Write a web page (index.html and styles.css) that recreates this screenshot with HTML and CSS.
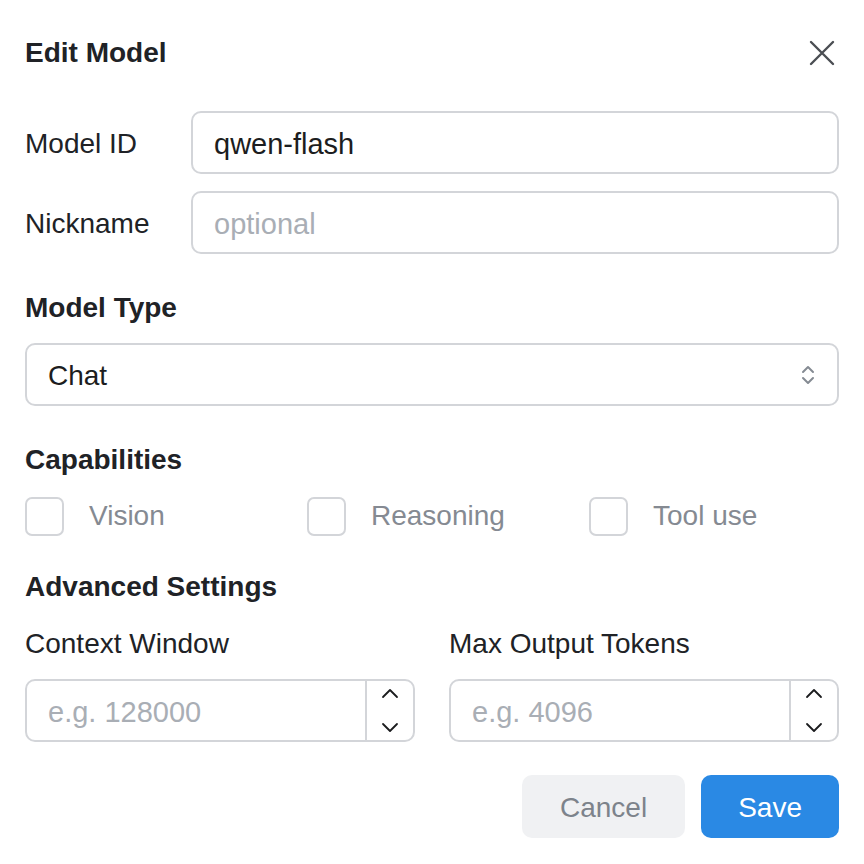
FILE: index.html
```html
<!DOCTYPE html>
<html lang="en">
<head>
<meta charset="utf-8">
<title>Edit Model</title>
<link rel="stylesheet" href="styles.css">
</head>
<body>
<div class="dialog">
  <div class="header">
    <h1 class="title">Edit Model</h1>
    <svg class="close" width="26" height="26" viewBox="0 0 26 26" aria-label="Close">
      <path d="M2 2 L24 24 M24 2 L2 24" stroke="#4b4e53" stroke-width="2.4" stroke-linecap="round" fill="none"/>
    </svg>
  </div>

  <div class="field-row first">
    <label class="row-label">Model ID</label>
    <input class="text-input" type="text" value="qwen-flash">
  </div>
  <div class="field-row">
    <label class="row-label">Nickname</label>
    <input class="text-input" type="text" placeholder="optional">
  </div>

  <h2 class="section">Model Type</h2>
  <div class="select">
    <span class="select-value">Chat</span>
    <svg class="select-arrows" width="14" height="24" viewBox="0 0 14 24">
      <path d="M2 9 L7 4 L12 9 M2 15 L7 20 L12 15" stroke="#858b93" stroke-width="2" stroke-linecap="round" stroke-linejoin="round" fill="none"/>
    </svg>
  </div>

  <h2 class="section">Capabilities</h2>
  <div class="caps">
    <div class="cap"><span class="checkbox"></span><span class="cap-label">Vision</span></div>
    <div class="cap"><span class="checkbox"></span><span class="cap-label">Reasoning</span></div>
    <div class="cap"><span class="checkbox"></span><span class="cap-label">Tool use</span></div>
  </div>

  <h2 class="section advanced">Advanced Settings</h2>
  <div class="adv-grid">
    <div class="adv-col">
      <label class="col-label">Context Window</label>
      <div class="number">
        <input class="number-input" type="text" placeholder="e.g. 128000">
        <div class="spinner">
          <svg width="18" height="62" viewBox="0 0 18 62">
            <path d="M2 17 L9 10 L16 17 M2 44 L9 51 L16 44" stroke="#1b1c1e" stroke-width="1.8" stroke-linecap="round" stroke-linejoin="round" fill="none"/>
          </svg>
        </div>
      </div>
    </div>
    <div class="adv-col">
      <label class="col-label">Max Output Tokens</label>
      <div class="number">
        <input class="number-input" type="text" placeholder="e.g. 4096">
        <div class="spinner">
          <svg width="18" height="62" viewBox="0 0 18 62">
            <path d="M2 17 L9 10 L16 17 M2 44 L9 51 L16 44" stroke="#1b1c1e" stroke-width="1.8" stroke-linecap="round" stroke-linejoin="round" fill="none"/>
          </svg>
        </div>
      </div>
    </div>
  </div>

  <div class="actions">
    <button class="btn btn-cancel">Cancel</button>
    <button class="btn btn-save">Save</button>
  </div>
</div>
</body>
</html>
```

FILE: styles.css
```css
* { box-sizing: border-box; }

html, body {
  margin: 0;
  padding: 0;
  background: #ffffff;
}

body {
  font-family: "Liberation Sans", Arial, Helvetica, sans-serif;
  font-size: 28px;
  color: #202226;
}

.dialog {
  padding: 35px 25px 0 25px;
  display: flex;
  flex-direction: column;
}

.header {
  display: flex;
  align-items: center;
  justify-content: space-between;
  height: 36px;
}

.title {
  margin: 0;
  font-size: 28px;
  font-weight: 700;
  line-height: 36px;
}

.close {
  margin-right: 4px;
}

.field-row {
  display: flex;
  align-items: center;
  margin-top: 17px;
}

.field-row.first {
  margin-top: 40px;
}

.row-label {
  width: 166px;
  flex: none;
  line-height: 36px;
  padding-top: 2px;
}

.text-input {
  flex: 1;
  min-width: 0;
  height: 63px;
  border: 2px solid #d3d5d9;
  border-radius: 10px;
  padding: 3px 21px 0 21px;
  font-family: inherit;
  font-size: 29px;
  color: #1c1d20;
  background: #fff;
  outline: none;
}

.text-input::placeholder,
.number-input::placeholder {
  color: #a9aeb5;
}

.section {
  margin: 36px 0 0 0;
  font-size: 28px;
  font-weight: 700;
  line-height: 36px;
}

.section.advanced {
  margin-top: 33px;
}

.select {
  margin-top: 17px;
  height: 63px;
  border: 2px solid #d3d5d9;
  border-radius: 10px;
  display: flex;
  align-items: center;
  justify-content: space-between;
  padding: 3px 22px 0 21px;
  color: #1c1d20;
}

.select-arrows {
  margin-top: -3px;
}

.caps {
  margin-top: 18px;
  display: grid;
  grid-template-columns: repeat(3, minmax(0, 1fr));
  column-gap: 32px;
}

.cap {
  display: flex;
  align-items: center;
  height: 40px;
}

.checkbox {
  width: 39px;
  height: 39px;
  border: 2px solid #d3d5d9;
  border-radius: 7px;
  flex: none;
  background: #fff;
}

.cap-label {
  margin-left: 25px;
  color: #858a92;
}

.adv-grid {
  margin-top: 19px;
  display: grid;
  grid-template-columns: minmax(0, 1fr) minmax(0, 1fr);
  column-gap: 34px;
}

.adv-col {
  display: flex;
  flex-direction: column;
  min-width: 0;
}

.col-label {
  line-height: 36px;
  padding-top: 2px;
}

.number {
  margin-top: 17px;
  height: 63px;
  border: 2px solid #d3d5d9;
  border-radius: 10px;
  display: flex;
  overflow: hidden;
}

.number-input {
  flex: 1;
  min-width: 0;
  width: 0;
  border: none;
  outline: none;
  padding: 3px 21px 0 21px;
  font-family: inherit;
  font-size: 29px;
  background: transparent;
}

.spinner {
  width: 48px;
  flex: none;
  border-left: 2px solid #d3d5d9;
  display: flex;
  align-items: center;
  justify-content: center;
}

.actions {
  margin-top: 33px;
  display: flex;
  justify-content: flex-end;
  gap: 16px;
}

.btn {
  height: 63px;
  border: none;
  border-radius: 10px;
  font-family: inherit;
  font-size: 28px;
  padding: 2px 38px 0 38px;
}

.btn-cancel {
  background: #f0f1f3;
  color: #7d838b;
}

.btn-save {
  background: #2a89e4;
  color: #ffffff;
  padding: 2px 37px 0 37px;
}
```
